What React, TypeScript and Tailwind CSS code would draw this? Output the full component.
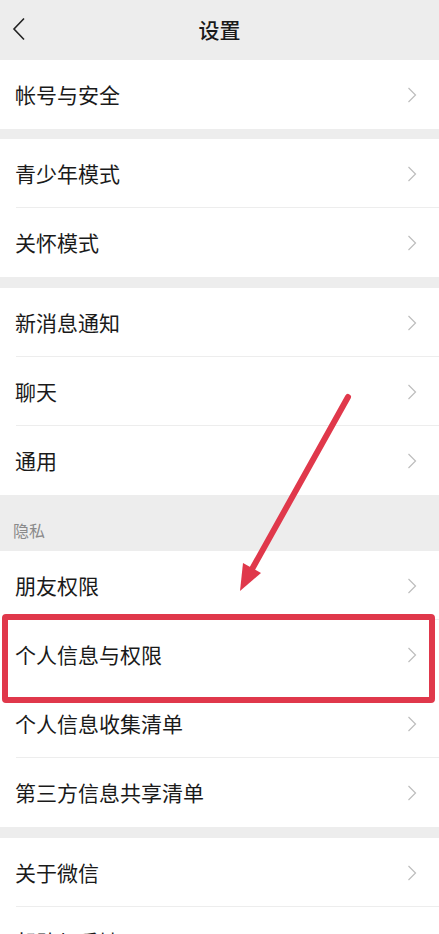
import { ReactNode } from 'react';

const font = '"Noto Sans CJK SC", "Noto Sans", sans-serif';

const ChevronRight = () => (
  <svg width="10" height="16" viewBox="0 0 10 16" fill="none" className="shrink-0">
    <path d="M1.5 1 L8.5 8 L1.5 15" stroke="#bdbdbd" strokeWidth="1.2" />
  </svg>
);

const Row = ({ label, last = false }: { label: string; last?: boolean }) => (
  <div className="relative flex h-[69px] items-center justify-between bg-white pl-[15px] pr-[22px]">
    <span className="text-[21px] text-[#1a1a1a]">{label}</span>
    <ChevronRight />
    {!last && <div className="absolute bottom-0 left-[16px] right-0 h-px bg-[#ededed]" />}
  </div>
);

const Group = ({ children }: { children: ReactNode }) => <div className="flex flex-col">{children}</div>;

export default function App() {
  return (
    <div className="relative h-[934px] w-[439px] overflow-hidden bg-[#ededed]" style={{ fontFamily: font }}>
      {/* 顶部导航 */}
      <div className="relative flex h-[60px] items-center justify-center">
        <svg width="14" height="24" viewBox="0 0 14 24" fill="none" className="absolute left-[12px] top-[17px]">
          <path d="M12 1.5 L2 12 L12 22.5" stroke="#222" strokeWidth="1.6" />
        </svg>
        <span className="text-[21px] font-medium text-[#1a1a1a]">设置</span>
      </div>

      <Group>
        <Row label="帐号与安全" last />
      </Group>
      <div className="h-[10px]" />
      <Group>
        <Row label="青少年模式" />
        <Row label="关怀模式" last />
      </Group>
      <div className="h-[11px]" />
      <Group>
        <Row label="新消息通知" />
        <Row label="聊天" />
        <Row label="通用" last />
      </Group>
      <div className="flex h-[56px] items-end pb-[9px] pl-[13px]">
        <span className="text-[16px] text-[#8a8a8a]">隐私</span>
      </div>
      <Group>
        <Row label="朋友权限" />
        <Row label="个人信息与权限" last />
        <Row label="个人信息收集清单" />
        <Row label="第三方信息共享清单" last />
      </Group>
      <div className="h-[11px]" />
      <Group>
        <Row label="关于微信" />
        <Row label="帮助与反馈" last />
      </Group>

      {/* 标注：红框 */}
      <div className="pointer-events-none absolute left-[2px] top-[614px] h-[89px] w-[433px] rounded-[4px] border-[6px] border-[#e0384b]" />

      {/* 标注：箭头 */}
      <svg className="pointer-events-none absolute left-0 top-0" width="439" height="934" viewBox="0 0 439 934">
        <line x1="348" y1="397" x2="251" y2="571" stroke="#e0384b" strokeWidth="6" strokeLinecap="round" />
        <polygon points="240,591 243,563 261,573" fill="#e0384b" />
      </svg>
    </div>
  );
}
